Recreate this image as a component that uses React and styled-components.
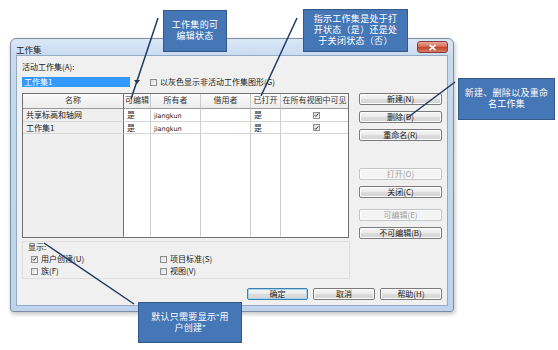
import styled, { createGlobalStyle } from 'styled-components';

const GlobalStyle = createGlobalStyle`
  html, body {
    margin: 0;
    padding: 0;
    background: #fff;
  }
  body {
    width: 558px;
    height: 350px;
    overflow: hidden;
    font-family: "Noto Sans CJK SC", "Liberation Sans", sans-serif;
  }
`;

const Stage = styled.div`
  position: relative;
  width: 558px;
  height: 350px;
  padding: 38px 0 0 10px;
  box-sizing: border-box;
`;

const Window = styled.div`
  width: 444px;
  height: 274px;
  box-sizing: border-box;
  display: flex;
  flex-direction: column;
  padding: 0 5px 5px;
  border: 1px solid #7f8ea3;
  border-radius: 6px 6px 3px 3px;
  background: linear-gradient(to bottom, #dae7f6 0, #c7daf0 18px, #bed3ec 100%);
  box-shadow: 1px 2px 4px rgba(0, 0, 0, 0.25);
`;

const TitleBar = styled.div`
  height: 16px;
  display: flex;
  align-items: flex-start;
  justify-content: space-between;
`;

const Title = styled.span`
  font-size: 8.5px;
  line-height: 10px;
  margin: 5px 0 0 0;
  color: #1b1b1b;
`;

const CloseButton = styled.div`
  width: 31px;
  height: 12px;
  margin-top: 2px;
  box-sizing: border-box;
  border: 1px solid #8a3a3a;
  border-radius: 3px;
  background: linear-gradient(#eaa897, #d4664f 50%, #c2422c 51%, #d87a62);
  display: flex;
  align-items: center;
  justify-content: center;
`;

const Client = styled.div`
  flex: 1;
  display: flex;
  flex-direction: column;
  box-sizing: border-box;
  padding: 6px 5px 0 5px;
  border: 1px solid #97aac4;
  background: #f0f0f0;
  font-size: 8px;
  color: #1a1a1a;
`;

const Label = styled.div`
  height: 10px;
  line-height: 10px;
`;

const ComboRow = styled.div`
  margin-top: 5px;
  height: 10px;
  display: flex;
  align-items: center;
`;

const Combo = styled.div`
  display: flex;
  align-items: center;
  width: 120px;
  height: 10px;
`;

const ComboValue = styled.div`
  width: 108px;
  height: 10px;
  line-height: 10px;
  padding-left: 2px;
  box-sizing: border-box;
  background: #3399ff;
  color: #fff;
`;

const ComboArrow = styled.div`
  margin-left: 4px;
  width: 0;
  height: 0;
  border-left: 3px solid transparent;
  border-right: 3px solid transparent;
  border-top: 4px solid #333;
`;

const CheckLine = styled.label`
  display: flex;
  align-items: center;
  gap: 3px;
  height: 10px;
  line-height: 10px;
  margin-left: ${(p) => p.$offset || 0}px;
  white-space: nowrap;
`;

const Box = styled.span`
  width: 7px;
  height: 7px;
  box-sizing: border-box;
  border: 1px solid #8f8f8f;
  background: linear-gradient(135deg, #dcdcdc, #fbfbfb);
  display: flex;
  align-items: center;
  justify-content: center;
`;

const Main = styled.div`
  margin-top: 6px;
  height: 145px;
  display: flex;
  gap: 10px;
`;

const Grid = styled.div`
  width: 327px;
  box-sizing: border-box;
  border: 1px solid #707070;
  display: grid;
  grid-template-columns: 101px 27px 50px 50px 30px 67px;
  grid-template-rows: 15px 13px 12px 1fr;
  background: #fff;
`;

const Cell = styled.div`
  box-sizing: border-box;
  border-right: 1px solid ${(p) => (p.$name ? '#6f6f6f' : '#cdcdcd')};
  border-bottom: 1px solid ${(p) => (p.$head ? '#9a9a9a' : p.$fill ? 'transparent' : '#d6d6d6')};
  background: ${(p) =>
    p.$head ? 'linear-gradient(#fbfbfb, #ececec)' : p.$name ? '#efefef' : '#fff'};
  text-align: ${(p) => (p.$head ? 'center' : 'left')};
  padding-left: ${(p) => (p.$head ? 0 : 3)}px;
  line-height: 12px;
  white-space: nowrap;
  overflow: hidden;
  color: ${(p) => (p.$head ? '#333' : '#1a1a1a')};
  display: ${(p) => (p.$center ? 'flex' : 'block')};
  align-items: center;
  justify-content: center;
  &:nth-child(6n) {
    border-right: none;
  }
`;

const Latin = styled.span`
  font-family: "DejaVu Sans", sans-serif;
  font-size: 6.5px;
`;

const ButtonColumn = styled.div`
  width: 83px;
  display: flex;
  flex-direction: column;
`;

const ButtonGroup = styled.div`
  display: flex;
  flex-direction: column;
  gap: 6px;
  margin-top: ${(p) => p.$top || 0}px;
`;

const Button = styled.div`
  width: ${(p) => p.$w || 83}px;
  height: 12px;
  box-sizing: border-box;
  border: 1px solid ${(p) => (p.$default ? '#3c7fb1' : p.$disabled ? '#c3c6c9' : '#7b7b7b')};
  border-radius: 2px;
  background: ${(p) =>
    p.$disabled ? '#f4f4f4' : 'linear-gradient(#f6f6f6, #ebebeb 50%, #dddddd 51%, #d3d3d3)'};
  box-shadow: ${(p) => (p.$default ? 'inset 0 0 0 1px #a8d6f0' : 'inset 0 0 0 1px #fcfcfc')};
  color: ${(p) => (p.$disabled ? '#a2a2a2' : '#1a1a1a')};
  font-size: 8px;
  line-height: 10px;
  text-align: center;
`;

const DisplayGroup = styled.div`
  margin-top: 3px;
  width: 328px;
  height: 38px;
  box-sizing: border-box;
  border: 1px solid #dedede;
  padding: 0 5px;
`;

const Options = styled.div`
  margin-top: 2px;
  padding-left: 3px;
  display: grid;
  grid-template-columns: 129px 1fr;
  row-gap: 2px;
`;

const Footer = styled.div`
  margin-top: 9px;
  display: flex;
  justify-content: flex-end;
  gap: 5px;
`;

const Lines = styled.svg`
  position: absolute;
  left: 0;
  top: 0;
  pointer-events: none;
`;

const Callout = styled.div`
  position: absolute;
  left: ${(p) => p.$x}px;
  top: ${(p) => p.$y}px;
  width: ${(p) => p.$w}px;
  height: ${(p) => p.$h}px;
  box-sizing: border-box;
  background: #4576b6;
  border: 1px solid #34588a;
  color: #fff;
  font-family: "Liberation Sans", "Noto Sans CJK SC", sans-serif;
  font-size: 9px;
  line-height: 11px;
  letter-spacing: 0.3px;
  text-align: center;
  display: flex;
  flex-direction: column;
  justify-content: center;
`;

function Check({ checked }) {
  return (
    <Box>
      {checked && (
        <svg width="6" height="6" viewBox="0 0 6 6">
          <path d="M0.8 3.2 L2.3 4.7 L5.2 1" stroke="#2b2b2b" strokeWidth="1.1" fill="none" />
        </svg>
      )}
    </Box>
  );
}

const rows = [
  ['共享标高和轴网', '是', 'jiangkun', '', '是', true],
  ['工作集1', '是', 'jiangkun', '', '是', true],
];

const headers = ['名称', '可编辑', '所有者', '借用者', '已打开', '在所有视图中可见'];

export default function App() {
  return (
    <>
      <GlobalStyle />
      <Stage>
        <Window>
          <TitleBar>
            <Title>工作集</Title>
            <CloseButton>
              <svg width="9" height="7" viewBox="0 0 9 7">
                <path d="M1.5 0.8 L7.5 6.2 M7.5 0.8 L1.5 6.2" stroke="#fff" strokeWidth="1.6" />
              </svg>
            </CloseButton>
          </TitleBar>
          <Client>
            <Label>活动工作集(A):</Label>
            <ComboRow>
              <Combo>
                <ComboValue>工作集1</ComboValue>
                <ComboArrow />
              </Combo>
              <CheckLine $offset={8}>
                <Check />
                以灰色显示非活动工作集图形(G)
              </CheckLine>
            </ComboRow>
            <Main>
              <Grid>
                {headers.map((h, i) => (
                  <Cell key={h} $head $name={i === 0}>
                    {h}
                  </Cell>
                ))}
                {rows.map((r) => (
                  <>
                    <Cell $name>{r[0]}</Cell>
                    <Cell>{r[1]}</Cell>
                    <Cell>
                      <Latin>{r[2]}</Latin>
                    </Cell>
                    <Cell>{r[3]}</Cell>
                    <Cell>{r[4]}</Cell>
                    <Cell $center>
                      <Check checked={r[5]} />
                    </Cell>
                  </>
                ))}
                {headers.map((h, i) => (
                  <Cell key={`f-${h}`} $fill $name={i === 0} />
                ))}
              </Grid>
              <ButtonColumn>
                <ButtonGroup>
                  <Button>新建(N)</Button>
                  <Button>删除(D)</Button>
                  <Button>重命名(R)</Button>
                </ButtonGroup>
                <ButtonGroup $top={27}>
                  <Button $disabled>打开(O)</Button>
                  <Button>关闭(C)</Button>
                </ButtonGroup>
                <ButtonGroup $top={11}>
                  <Button $disabled>可编辑(E)</Button>
                  <Button>不可编辑(B)</Button>
                </ButtonGroup>
              </ButtonColumn>
            </Main>
            <DisplayGroup>
              <Label>显示:</Label>
              <Options>
                <CheckLine>
                  <Check checked />
                  用户创建(U)
                </CheckLine>
                <CheckLine>
                  <Check />
                  项目标准(S)
                </CheckLine>
                <CheckLine>
                  <Check />
                  族(F)
                </CheckLine>
                <CheckLine>
                  <Check />
                  视图(V)
                </CheckLine>
              </Options>
            </DisplayGroup>
            <Footer>
              <Button $w={61} $default>确定</Button>
              <Button $w={62}>取消</Button>
              <Button $w={62}>帮助(H)</Button>
            </Footer>
          </Client>
        </Window>

        <Lines width="558" height="350" viewBox="0 0 558 350">
          <g stroke="#1f3a62" strokeWidth="1.5" fill="none">
            <line x1="158" y1="18" x2="131" y2="99" />
            <line x1="297" y1="18" x2="261" y2="96" />
            <line x1="455" y1="82" x2="407" y2="118" />
            <line x1="44" y1="243" x2="134" y2="304" />
          </g>
        </Lines>

        <Callout $x={163} $y={10} $w={64} $h={42}>
          <span>工作集的可</span>
          <span>编辑状态</span>
        </Callout>
        <Callout $x={303} $y={9} $w={105} $h={43}>
          <span>指示工作集是处于打</span>
          <span>开状态（是）还是处</span>
          <span>于关闭状态（否）</span>
        </Callout>
        <Callout $x={458} $y={78} $w={97} $h={42}>
          <span>新建、删除以及重命</span>
          <span>名工作集</span>
        </Callout>
        <Callout $x={138} $y={302} $w={104} $h={41}>
          <span>默认只需要显示“用</span>
          <span>户创建”</span>
        </Callout>
      </Stage>
    </>
  );
}
